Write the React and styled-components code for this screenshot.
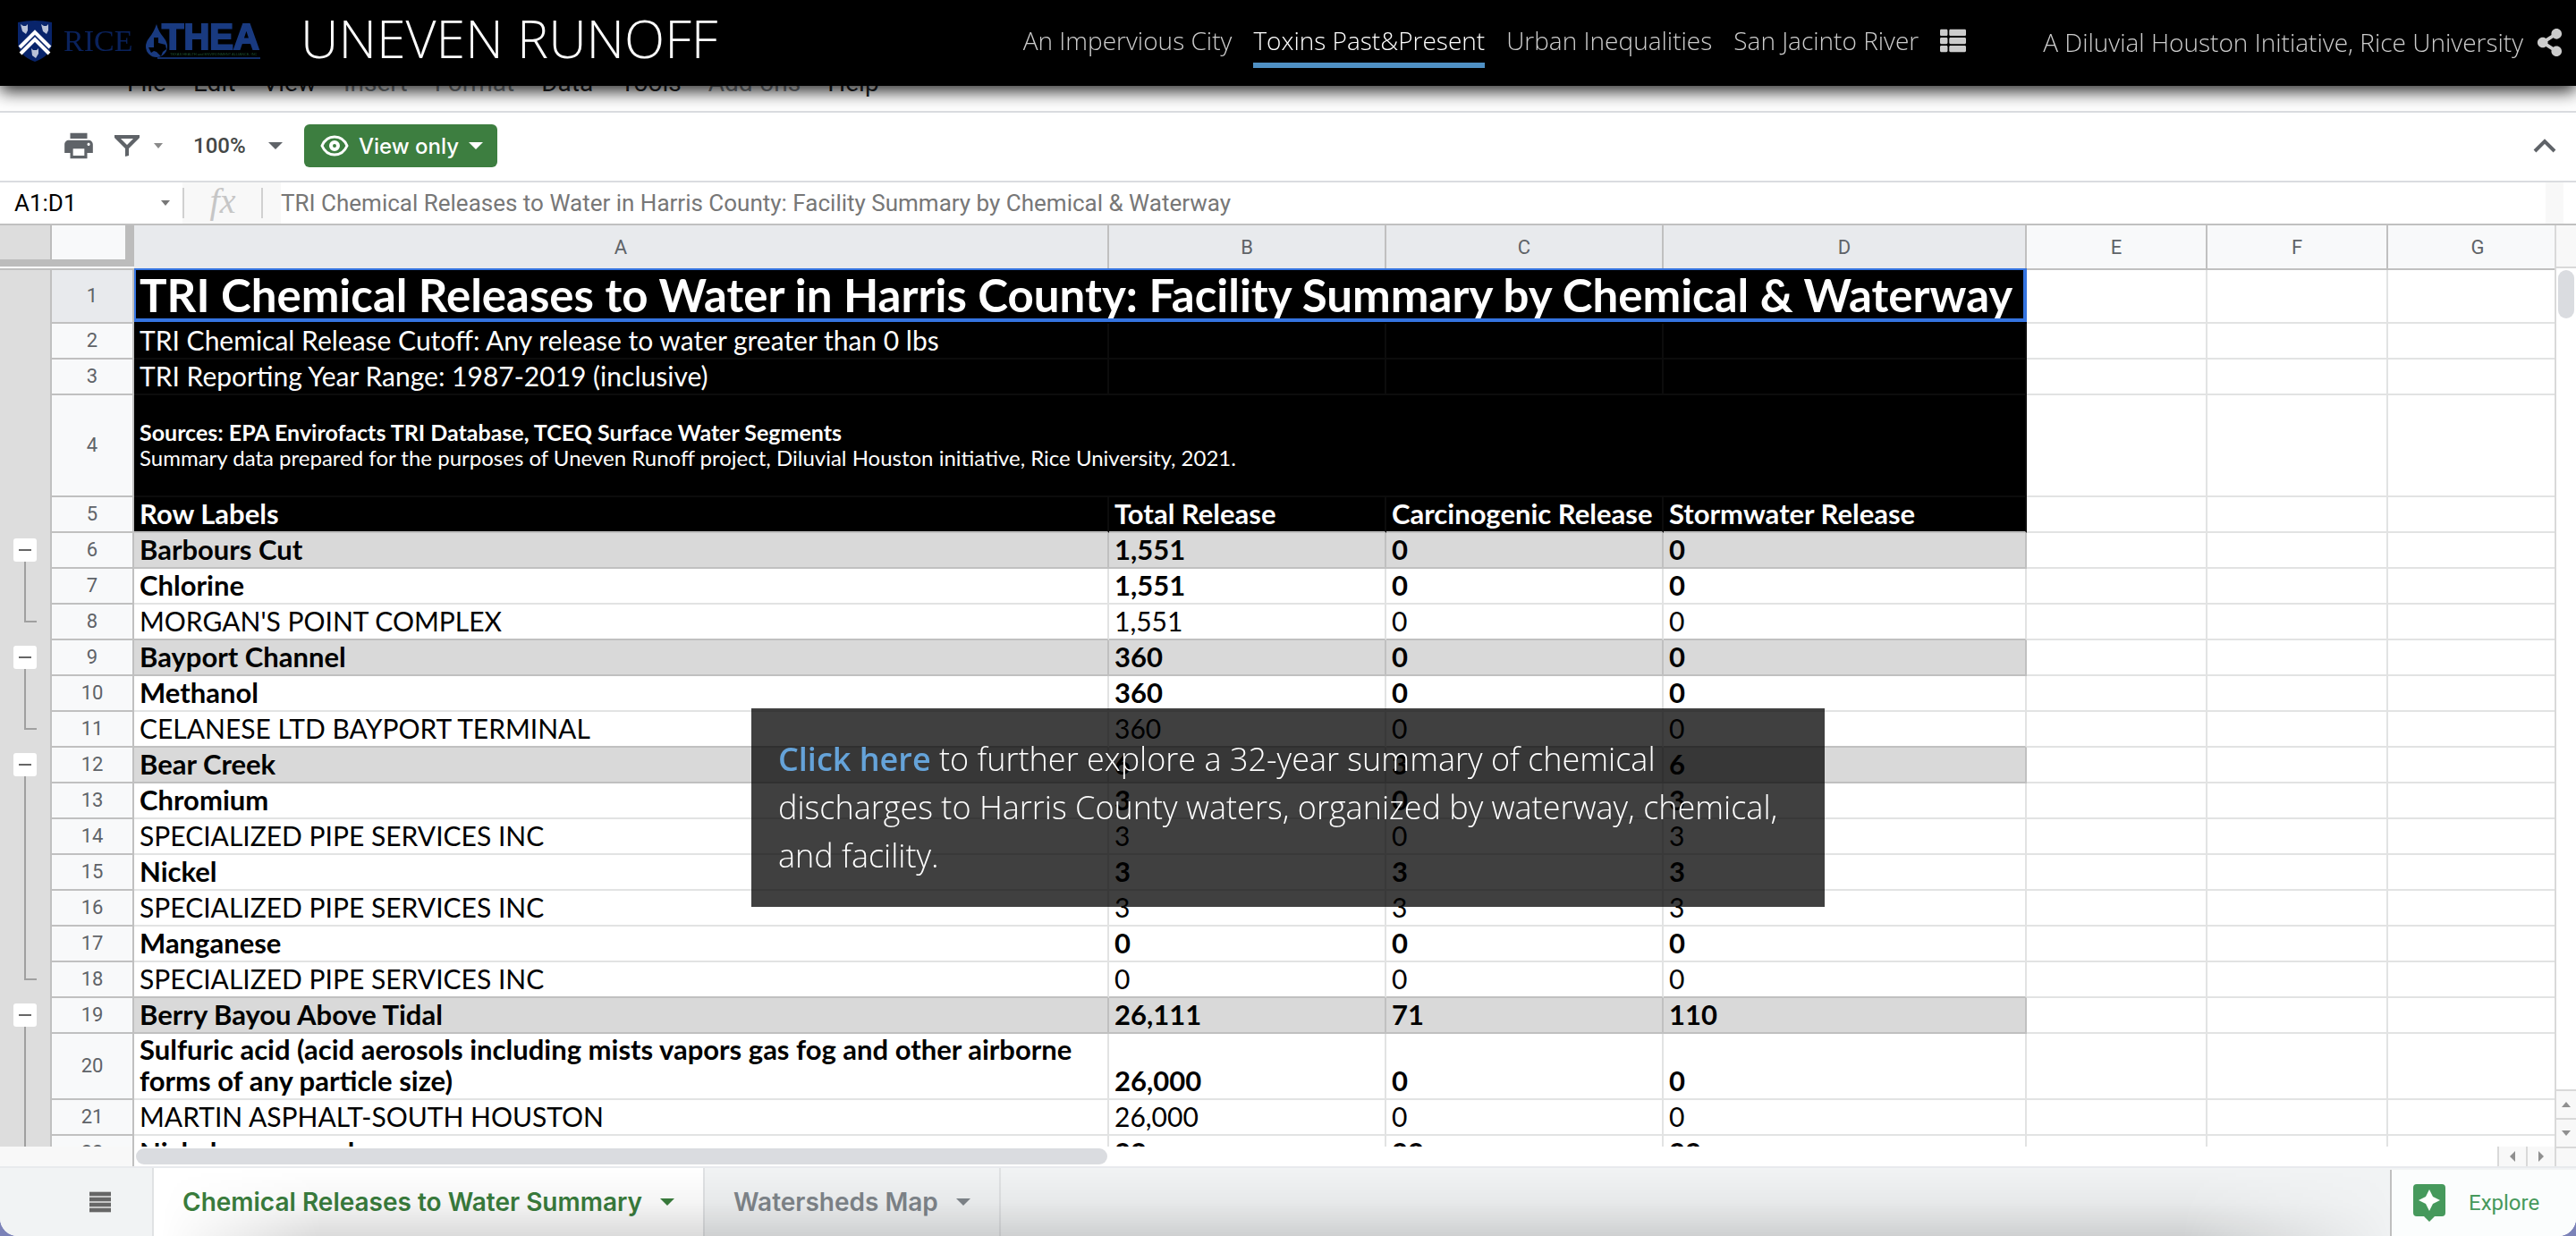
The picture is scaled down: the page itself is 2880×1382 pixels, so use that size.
import styled, { createGlobalStyle, css } from 'styled-components'
import { FaShareAlt, FaThList } from 'react-icons/fa'
import { MdPrint } from 'react-icons/md'

const TITLE = 'TRI Chemical Releases to Water in Harris County: Facility Summary by Chemical & Waterway'

const menus = [
    { name: 'File' },
    { name: 'Edit' },
    { name: 'View' },
    { name: 'Insert', off: true },
    { name: 'Format', off: true },
    { name: 'Data' },
    { name: 'Tools' },
    { name: 'Add-ons', off: true },
    { name: 'Help' },
]

const columns = [58, 92, 1090, 310, 310, 406, 202, 202, 202]

// type: group = gray waterway row, chemical = bold row, facility = plain row
const rows = [
    { n: 6, type: 'group', fold: 'start', cells: ['Barbours Cut', '1,551', '0', '0'] },
    { n: 7, type: 'chemical', fold: 'mid', cells: ['Chlorine', '1,551', '0', '0'] },
    { n: 8, type: 'facility', fold: 'end', cells: ["MORGAN'S POINT COMPLEX", '1,551', '0', '0'] },
    { n: 9, type: 'group', fold: 'start', cells: ['Bayport Channel', '360', '0', '0'] },
    { n: 10, type: 'chemical', fold: 'mid', cells: ['Methanol', '360', '0', '0'] },
    { n: 11, type: 'facility', fold: 'end', cells: ['CELANESE LTD BAYPORT TERMINAL', '360', '0', '0'] },
    { n: 12, type: 'group', fold: 'start', cells: ['Bear Creek', '6', '3', '6'] },
    { n: 13, type: 'chemical', fold: 'mid', cells: ['Chromium', '3', '0', '3'] },
    { n: 14, type: 'facility', fold: 'mid', cells: ['SPECIALIZED PIPE SERVICES INC', '3', '0', '3'] },
    { n: 15, type: 'chemical', fold: 'mid', cells: ['Nickel', '3', '3', '3'] },
    { n: 16, type: 'facility', fold: 'mid', cells: ['SPECIALIZED PIPE SERVICES INC', '3', '3', '3'] },
    { n: 17, type: 'chemical', fold: 'mid', cells: ['Manganese', '0', '0', '0'] },
    { n: 18, type: 'facility', fold: 'end', cells: ['SPECIALIZED PIPE SERVICES INC', '0', '0', '0'] },
    { n: 19, type: 'group', fold: 'start', cells: ['Berry Bayou Above Tidal', '26,111', '71', '110'] },
    {
        n: 20,
        type: 'chemical',
        fold: 'mid',
        cells: ['Sulfuric acid (acid aerosols including mists vapors gas fog and other airborne forms of any particle size)', '26,000', '0', '0'],
    },
    { n: 21, type: 'facility', fold: 'mid', cells: ['MARTIN ASPHALT-SOUTH HOUSTON', '26,000', '0', '0'] },
    { n: 22, type: 'chemical', fold: 'mid', cells: ['Nickel compounds', '22', '22', '22'] },
]

export default function App() {
    return (
        <Page>
            <GlobalStyle />
            <SiteHeader />
            <MenuBar>
                {menus.map((menu) => (
                    <MenuItem key={menu.name} disabled={menu.off}>{menu.name}</MenuItem>
                ))}
            </MenuBar>
            <SheetToolbar />
            <FormulaBar>
                <NameBox>
                    <NameInput aria-label='Name box' defaultValue='A1:D1' />
                    <Caret $size={5} $color='#777' />
                </NameBox>
                <FxLabel><i>fx</i></FxLabel>
                <FormulaInput aria-label='Formula' value={TITLE} readOnly />
                <FormulaEdge />
            </FormulaBar>
            <SheetArea>
                <GridView><Grid /></GridView>
                <VerticalBar>
                    <VerticalTop />
                    <VerticalTrack><VerticalThumb /></VerticalTrack>
                    <ArrowButton aria-label='Scroll up'><Caret $up $size={5} $color='#8f8f8f' /></ArrowButton>
                    <ArrowButton aria-label='Scroll down'><Caret $size={5} $color='#8f8f8f' /></ArrowButton>
                </VerticalBar>
            </SheetArea>
            <HorizontalBar>
                <HorizontalStart />
                <HorizontalTrack><HorizontalThumb /></HorizontalTrack>
                <SideButton aria-label='Scroll left'>
                    <svg width='6' height='12' viewBox='0 0 6 12'><path d='M6 0v12L0 6z' fill='#8f8f8f' /></svg>
                </SideButton>
                <SideButton aria-label='Scroll right'>
                    <svg width='6' height='12' viewBox='0 0 6 12'><path d='M0 0v12l6-6z' fill='#8f8f8f' /></svg>
                </SideButton>
                <HorizontalEnd />
            </HorizontalBar>
            <SheetTabs />
            <StoryCard>
                <a href='#explore'>Click here</a> to further explore a 32-year summary of chemical discharges to Harris County waters, organized by waterway, chemical, and facility.
            </StoryCard>
        </Page>
    )
}

function SiteHeader() {
    return (
        <Header>
            <Logos />
            <SiteTitle>UNEVEN RUNOFF</SiteTitle>
            <Nav>
                <NavLink href='#city'>An Impervious City</NavLink>
                <NavLink href='#toxins' $active>Toxins Past&amp;Present</NavLink>
                <NavLink href='#urban'>Urban Inequalities</NavLink>
                <NavLink href='#river'>San Jacinto River</NavLink>
                <ListButton aria-label='Contents'><FaThList size={29} /></ListButton>
            </Nav>
            <Credit>
                <span>A Diluvial Houston Initiative, Rice University</span>
                <IconButton aria-label='Share'><FaShareAlt size={31} /></IconButton>
            </Credit>
        </Header>
    )
}

function Logos() {
    return (
        <svg width='272' height='46' viewBox='20 23 272 46' role='img' aria-label='Rice and THEA'>
            <path d='M20 25q19-4 38 0v22q0 15-19 22q-19-7-19-22z' fill='#08246b' />
            <path d='M22 53l17-17l17 17' fill='none' stroke='#fff' strokeWidth='4' />
            <path d='M23 60l16-16l16 16' fill='none' stroke='#fff' strokeWidth='4' />
            <path d='M23 27l3 2h3l2-2v7l-2 4l-4-3z' fill='#b9c2d8' />
            <path d='M46 27l3 2h3l2-2v7l-2 4l-4-3z' fill='#b9c2d8' />
            <path d='M35 54l2 2h4l2-2v6l-3 5l-4-3z' fill='#b9c2d8' />
            <text x='71' y='57' fontFamily='Liberation Serif, serif' fontSize='34' fill='#0a225c'>RICE</text>
            <path d='M175 27q-3 9-8 15q-4 5-4 10a12 12 0 0 0 24 0q0-5-4-10q-6-7-8-15z' fill='#193a80' />
            <path d='M172 42h5v6l8 2l1 5l-4 3l-2 5l-5-5l-3-1l-3 2l-3-6h6z' fill='#000' />
            <text x='181' y='55' fontFamily='Liberation Sans, sans-serif' fontWeight='700' fontSize='40' fill='#193a80' stroke='#193a80' strokeWidth='2'>THEA</text>
            <text x='190' y='62' fontFamily='Liberation Sans, sans-serif' fontSize='4' fill='#1d5230'>TEXAS HEALTH and ENVIRONMENT ALLIANCE, INC</text>
            <path d='M176 65h115' stroke='#14306c' strokeWidth='2' />
        </svg>
    )
}

function SheetToolbar() {
    return (
        <Toolbar>
            <ToolButton aria-label='Print'><MdPrint size={38} /></ToolButton>
            <FilterButton aria-label='Filter'>
                <svg width='28' height='24' viewBox='0 0 28 24'>
                    <path d='M0 0h28v3L16 15v8l-4 1v-9L0 3zM7 4l7 7l7-7z' fill='#5f6368' fillRule='evenodd' />
                </svg>
                <Caret $size={5} $color='#8a8a8a' />
            </FilterButton>
            <ZoomBox>
                <ZoomSelect aria-label='Zoom' defaultValue='100%'><option>100%</option></ZoomSelect>
                <Caret $size={8} $color='#5f6368' />
            </ZoomBox>
            <ViewButton>
                <svg width='32' height='24' viewBox='0 0 32 24' fill='none' stroke='#fff'>
                    <path d='M2 12C5 5 10 2 16 2s11 3 14 10c-3 7-8 10-14 10S5 19 2 12z' strokeWidth='3' />
                    <circle cx='16' cy='12' r='4' strokeWidth='4' />
                </svg>
                <span>View only</span>
                <Caret $size={8} $color='#fff' />
            </ViewButton>
            <CollapseButton aria-label='Hide the menus'>
                <svg width='26' height='16' viewBox='0 0 26 16'>
                    <path d='M2 14L13 3l11 11' fill='none' stroke='#5f6368' strokeWidth='4' />
                </svg>
            </CollapseButton>
        </Toolbar>
    )
}

function Grid() {
    return (
        <Table>
            <colgroup>
                {columns.map((width, i) => <Column key={i} $width={width} />)}
            </colgroup>
            <thead>
                <tr>
                    <CornerCell $gutter><div /></CornerCell>
                    <CornerCell><div /></CornerCell>
                    {['A', 'B', 'C', 'D'].map((name) => <ColumnHead key={name} $selected>{name}</ColumnHead>)}
                    {['E', 'F', 'G'].map((name) => <ColumnHead key={name}>{name}</ColumnHead>)}
                </tr>
            </thead>
            <tbody>
                <Row $height={60}>
                    <Gutter />
                    <RowHead $selected>1</RowHead>
                    <TitleCell colSpan={4}>{TITLE}</TitleCell>
                    <EmptyCells />
                </Row>
                <Row>
                    <Gutter />
                    <RowHead>2</RowHead>
                    <Cell $kind='dark'>TRI Chemical Release Cutoff: Any release to water greater than 0 lbs</Cell>
                    <Cell $kind='dark' />
                    <Cell $kind='dark' />
                    <Cell $kind='dark' />
                    <EmptyCells />
                </Row>
                <Row>
                    <Gutter />
                    <RowHead>3</RowHead>
                    <Cell $kind='dark'>TRI Reporting Year Range: 1987-2019 (inclusive)</Cell>
                    <Cell $kind='dark' />
                    <Cell $kind='dark' />
                    <Cell $kind='dark' />
                    <EmptyCells />
                </Row>
                <Row $height={114}>
                    <Gutter />
                    <RowHead>4</RowHead>
                    <SourceCell $kind='dark' colSpan={4}>
                        <strong>Sources: EPA Envirofacts TRI Database, TCEQ Surface Water Segments</strong>
                        <br />
                        Summary data prepared for the purposes of Uneven Runoff project, Diluvial Houston initiative, Rice University, 2021.
                    </SourceCell>
                    <EmptyCells />
                </Row>
                <Row>
                    <Gutter />
                    <RowHead>5</RowHead>
                    {['Row Labels', 'Total Release', 'Carcinogenic Release', 'Stormwater Release'].map((label) => (
                        <Cell key={label} $kind='dark' $bold $line>{label}</Cell>
                    ))}
                    <EmptyCells />
                </Row>
                {rows.map((row) => (
                    <Row key={row.n} $height={row.n === 20 ? 74 : 40}>
                        <Gutter $fold={row.fold}>
                            {row.fold === 'start' && <FoldButton aria-label='Collapse group' />}
                        </Gutter>
                        <RowHead>{row.n}</RowHead>
                        {row.cells.map((text, i) => (
                            <Cell key={i} $kind={row.type} $bold={row.type !== 'facility'} $line={row.fold === 'end'}>{text}</Cell>
                        ))}
                        <EmptyCells />
                    </Row>
                ))}
            </tbody>
        </Table>
    )
}

function EmptyCells() {
    return (
        <>
            <Cell />
            <Cell />
            <Cell />
        </>
    )
}

function SheetTabs() {
    return (
        <TabBar>
            <AllSheets aria-label='All sheets'>
                <svg width='24' height='24' viewBox='0 0 24 24'>
                    <path d='M0 0h24v24H0z' fill='#c4c4c4' />
                    <path d='M0 3h24M0 9h24M0 15h24M0 21h24' stroke='#666' strokeWidth='4' />
                </svg>
            </AllSheets>
            <Tab $active>Chemical Releases to Water Summary<Caret $size={8} $color='#3a7d3d' /></Tab>
            <Tab>Watersheds Map<Caret $size={8} $color='#80868b' /></Tab>
            <Explore>
                <svg width='36' height='42' viewBox='0 0 36 42'>
                    <path d='M4 0h28q4 0 4 4v28q0 4-4 4h-8l-6 6l-6-6H4q-4 0-4-4V4q0-4 4-4z' fill='#46995c' />
                    <path d='M18 6l4 8l8 4l-8 4l-4 8l-4-8l-8-4l8-4z' fill='#fff' />
                </svg>
                Explore
            </Explore>
        </TabBar>
    )
}

const GlobalStyle = createGlobalStyle`
    *{
        box-sizing: border-box;
    }
    body{
        margin: 0;
        background-color: #7b82b8;
    }
    button, input, select{
        margin: 0;
        padding: 0;
        border: 0;
        background: none;
        font: inherit;
        color: inherit;
    }
    svg{
        display: block;
        flex-shrink: 0;
    }
`

const Page = styled.div`
    height: 100vh;
    display: flex;
    flex-direction: column;
    overflow: hidden;
    background-color: white;
    border-radius: 0 0 20px 20px;
    font-family: Roboto, sans-serif;
    font-size: 26px;
`

const Caret = styled.span`
    flex-shrink: 0;
    border-left: ${(p) => p.$size}px solid transparent;
    border-right: ${(p) => p.$size}px solid transparent;
    ${(p) => (p.$up ? 'border-bottom' : 'border-top')}: ${(p) => (p.$size === 8 ? 8 : 6)}px solid ${(p) => p.$color};
`

const Header = styled.header`
    position: fixed;
    top: 0;
    left: 0;
    right: 0;
    z-index: 2;
    height: 96px;
    padding: 0 14px 12px 20px;
    display: flex;
    align-items: center;
    background-color: black;
    color: #cccccc;
    font-family: 'Open Sans', sans-serif;
    font-weight: 300;
    font-size: 28px;
    line-height: 38px;
    white-space: nowrap;
    box-shadow: 0 6px 18px rgba(0, 0, 0, 0.85);
    > svg{
        margin-top: 8px;
    }
`

const SiteTitle = styled.h1`
    margin: 0 0 0 44px;
    font-weight: 300;
    font-size: 59px;
    line-height: 80px;
    color: white;
`

const Nav = styled.nav`
    margin-left: auto;
    display: flex;
    align-items: center;
    gap: 24px;
`

const NavLink = styled.a`
    padding: 18px 0 6px;
    border-bottom: 6px solid ${(p) => (p.$active ? '#4f90c4' : 'transparent')};
    color: ${(p) => (p.$active ? 'white' : 'inherit')};
    text-decoration: none;
`

const IconButton = styled.button`
    color: #cccccc;
`

const ListButton = styled(IconButton)`
    padding-top: 6px;
`

const Credit = styled.div`
    margin-left: 86px;
    padding-top: 10px;
    display: flex;
    align-items: center;
    gap: 14px;
`

const MenuBar = styled.div`
    flex-shrink: 0;
    height: 126px;
    padding: 0 0 14px 142px;
    display: flex;
    align-items: flex-end;
    gap: 30px;
    border-bottom: 2px solid #dadce0;
    font-size: 28px;
    line-height: 34px;
`

const MenuItem = styled.button`
    color: #202124;
    &:disabled{
        color: #80868b;
    }
`

const Toolbar = styled.div`
    flex-shrink: 0;
    height: 78px;
    padding: 0 22px 2px 69px;
    display: flex;
    align-items: center;
    border-bottom: 2px solid #dadce0;
`

const ToolButton = styled.button`
    color: #5f6368;
`

const FilterButton = styled.button`
    margin-left: 21px;
    display: flex;
    align-items: center;
    gap: 16px;
`

const ZoomBox = styled.div`
    margin-left: 34px;
    display: flex;
    align-items: center;
    color: #444746;
    font-size: 24px;
    font-weight: 500;
`

const ZoomSelect = styled.select`
    width: 84px;
    appearance: none;
`

const ViewButton = styled.button`
    height: 48px;
    margin-left: 24px;
    padding: 0 16px 0 18px;
    display: flex;
    align-items: center;
    gap: 11px;
    border-radius: 6px;
    background-color: #3d7e40;
    color: white;
    font-family: Inter, sans-serif;
    font-size: 24px;
    font-weight: 500;
`

const CollapseButton = styled.button`
    margin-left: auto;
`

const FormulaBar = styled.div`
    flex-shrink: 0;
    height: 48px;
    display: flex;
    border-bottom: 2px solid #c0c0c0;
`

const NameBox = styled.div`
    width: 204px;
    padding: 0 14px 0 16px;
    display: flex;
    align-items: center;
    justify-content: space-between;
    input{
        width: 150px;
    }
`

const NameInput = styled.input`
    color: black;
`

const FxLabel = styled.div`
    width: 110px;
    padding: 6px 20px 6px 0;
    background-color: #f8f8f8;
    i{
        display: block;
        height: 34px;
        border-left: 2px solid #d0d0d0;
        border-right: 2px solid #d0d0d0;
        font-family: 'Liberation Serif', serif;
        font-size: 40px;
        line-height: 30px;
        text-align: center;
        color: #c6c6c6;
    }
`

const FormulaInput = styled.input`
    flex: 1;
    color: #777777;
`

const FormulaEdge = styled.div`
    width: 20px;
    margin-right: 14px;
    background-color: #f8f8f8;
`

const SheetArea = styled.main`
    flex: 1;
    min-height: 0;
    display: flex;
`

const GridView = styled.div`
    flex: 1;
    min-width: 0;
    overflow: hidden;
`

const Table = styled.table`
    width: 2872px;
    table-layout: fixed;
    border-collapse: separate;
    border-spacing: 0;
`

const Column = styled.col`
    width: ${(p) => p.$width}px;
`

const CornerCell = styled.td`
    height: 50px;
    padding: 0 0 2px;
    border-bottom: 2px solid #c0c0c0;
    background-color: #f8f9fa;
    div{
        height: 46px;
        border: 0 solid #bcbcbc;
        border-bottom-width: 8px;
        border-right-width: 10px;
        ${(p) => p.$gutter && css`
            border-right-width: 2px;
            background-color: #dddddd;
        `}
    }
`

const ColumnHead = styled.th`
    height: 50px;
    padding: 0;
    border: 0 solid #c0c0c0;
    border-right-width: 2px;
    border-bottom-width: 2px;
    background-color: ${(p) => (p.$selected ? '#e8eaed' : '#f8f9fa')};
    color: #5f6368;
    font-size: 22px;
    font-weight: 400;
`

const Row = styled.tr`
    height: ${(p) => p.$height || 40}px;
`

const stem = {
    start: css`
        background-position: 27px 100%;
        background-size: 2px 40%;
    `,
    mid: css`
        background-position: 27px 0;
        background-size: 2px 100%;
    `,
    end: css`
        background-position: 27px 0, 27px 18px;
        background-size: 2px 20px, 14px 2px;
    `,
}

const Gutter = styled.td`
    padding: 0 0 2px 15px;
    border-right: 2px solid #c0c0c0;
    background-color: #dddddd;
    ${(p) => p.$fold && css`
        background-image: linear-gradient(#a0a0a0, #a0a0a0), linear-gradient(#a0a0a0, #a0a0a0);
        background-repeat: no-repeat;
        ${stem[p.$fold]}
    `}
`

const FoldButton = styled.button`
    display: flex;
    align-items: center;
    justify-content: center;
    width: 26px;
    height: 26px;
    border-radius: 3px;
    background-color: white;
    &::before{
        content: '';
        width: 14px;
        height: 2px;
        background-color: #666666;
    }
`

const RowHead = styled.th`
    padding: 0;
    border: 0 solid #c0c0c0;
    border-right-width: 2px;
    border-bottom-width: 2px;
    background-color: ${(p) => (p.$selected ? '#e8eaed' : '#f8f9fa')};
    color: #5f6368;
    font-size: 22px;
    font-weight: 400;
    line-height: 24px;
`

const kinds = {
    dark: css`
        background-color: black;
        color: white;
        border-color: #0c0c0c;
    `,
    group: css`
        background-color: #d9d9d9;
        border-color: #c0c0c0;
    `,
}

const Cell = styled.td`
    padding: 0 4px 2px 6px;
    border: 0 solid #e2e3e3;
    border-right-width: 2px;
    border-bottom-width: 2px;
    color: black;
    font-family: Lato, sans-serif;
    font-size: ${(p) => (p.$bold ? 31 : 30)}px;
    font-weight: ${(p) => (p.$bold ? 700 : 400)};
    line-height: 35px;
    vertical-align: bottom;
    ${(p) => kinds[p.$kind]}
    ${(p) => p.$line && css`
        border-bottom-color: #c0c0c0;
    `}
`

const TitleCell = styled.td`
    position: relative;
    padding: 0 4px 0 6px;
    background-color: black;
    color: white;
    font-family: Lato, sans-serif;
    font-size: 51px;
    font-weight: 700;
    line-height: 56px;
    vertical-align: top;
    white-space: nowrap;
    /* selection frame */
    &::after{
        content: '';
        position: absolute;
        inset: -2px 0 2px 0;
        border: 2px solid #3574e0;
        border-right-width: 4px;
        border-bottom-width: 4px;
    }
`

const SourceCell = styled(Cell)`
    font-size: 24px;
    line-height: 28px;
    vertical-align: middle;
    strong{
        font-size: 25px;
    }
`

const VerticalBar = styled.div`
    width: 24px;
    display: flex;
    flex-direction: column;
    border-left: 2px solid #d9d9d9;
`

const VerticalTop = styled.div`
    height: 48px;
    background-color: #f8f8f8;
    border-bottom: 2px solid #d9d9d9;
`

const VerticalTrack = styled.div`
    flex: 1;
    padding: 2px;
`

const VerticalThumb = styled.div`
    height: 54px;
    border-radius: 9px;
    background-color: #dadce0;
`

const ArrowButton = styled.button`
    height: 32px;
    display: flex;
    align-items: center;
    justify-content: center;
    background-color: #f8f8f8;
    border-top: 2px solid #d9d9d9;
`

const HorizontalBar = styled.div`
    flex-shrink: 0;
    height: 22px;
    display: flex;
`

const HorizontalStart = styled.div`
    width: 150px;
    background-color: #f8f8f8;
    border-right: 2px solid #c0c0c0;
`

const HorizontalTrack = styled.div`
    flex: 1;
    padding: 2px;
`

const HorizontalThumb = styled.div`
    width: 1086px;
    height: 18px;
    border-radius: 9px;
    background-color: #dadce0;
`

const SideButton = styled.button`
    width: 32px;
    display: flex;
    align-items: center;
    justify-content: center;
    background-color: #f8f8f8;
    border-left: 2px solid #d9d9d9;
`

const HorizontalEnd = styled.div`
    width: 24px;
    background-color: #f8f8f8;
    border-top: 2px solid #d9d9d9;
    border-left: 2px solid #d9d9d9;
`

const TabBar = styled.footer`
    position: relative;
    flex-shrink: 0;
    height: 78px;
    display: flex;
    background-color: #f1f3f4;
    border-top: 2px solid #e8eaed;
    /* soft shade rising from the bottom edge */
    &::after{
        content: '';
        position: absolute;
        inset: 0 200px 0 180px;
        background-image: linear-gradient(transparent, rgba(0, 0, 0, 0.04) 50%, rgba(0, 0, 0, 0.14));
        mask-image: linear-gradient(to right, transparent, black 180px, black calc(100% - 240px), transparent);
        pointer-events: none;
    }
`

const AllSheets = styled.button`
    width: 170px;
    padding: 0 46px 0 100px;
`

const Tab = styled.button`
    padding: 0 32px;
    display: flex;
    align-items: center;
    gap: 20px;
    border: 0 solid #e0e2e4;
    border-right-width: 2px;
    font-family: Inter, sans-serif;
    font-size: 28px;
    font-weight: 600;
    color: #80868b;
    white-space: nowrap;
    ${(p) => p.$active && css`
        border-left-width: 2px;
        background-color: white;
        color: #3a7d3d;
    `}
`

const Explore = styled.button`
    width: 208px;
    margin: 2px 0 0 auto;
    padding-left: 24px;
    display: flex;
    align-items: center;
    gap: 26px;
    background-color: #fbfdfd;
    border-left: 2px solid #c0c0c0;
    color: #46995c;
    font-size: 24px;
`

const StoryCard = styled.p`
    position: fixed;
    top: 792px;
    left: 50%;
    z-index: 1;
    width: 1200px;
    margin: 0;
    padding: 30px;
    transform: translateX(-50%);
    background-color: rgba(0, 0, 0, 0.75);
    color: white;
    font-family: 'Open Sans', sans-serif;
    font-size: 36px;
    font-weight: 300;
    line-height: 54px;
    a{
        color: #65a3d9;
        font-weight: 600;
        text-decoration: none;
    }
`
